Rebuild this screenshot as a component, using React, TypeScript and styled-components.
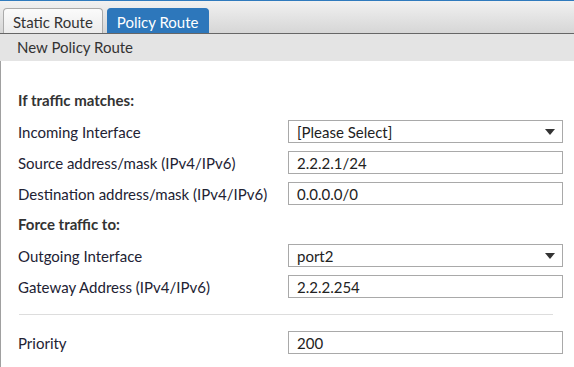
import React from 'react';
import styled, { createGlobalStyle } from 'styled-components';

const GlobalStyle = createGlobalStyle`
  html, body, #root {
    margin: 0;
    height: 100%;
  }
  body {
    font-family: Lato, "Liberation Sans", sans-serif;
    background-color: #ffffff;
    color: #333333;
  }
`;

const Page = styled.div`
  display: flex;
  flex-direction: column;
  height: 100vh;
`;

const TabBar = styled.div`
  height: 32px;
  display: flex;
  align-items: flex-end;
  gap: 4px;
  padding-left: 3px;
  border-top: 1px solid #2f7abd;
  border-bottom: 1px solid #666666;
  background: linear-gradient(to bottom, #f1f1f1, #d6d6d6);
`;

const Tab = styled.div<{ $active?: boolean }>`
  height: 25px;
  box-sizing: border-box;
  display: flex;
  align-items: center;
  padding: 2px 9px 0 9px;
  font-size: 15px;
  border-radius: 4px 4px 0 0;
  border: 1px solid ${p => (p.$active ? '#2d77bb' : '#aaaaaa')};
  border-bottom: none;
  color: ${p => (p.$active ? '#ffffff' : '#333333')};
  background: ${p => (p.$active ? '#2d77bb' : 'linear-gradient(to bottom, #fbfbfb, #ececec)')};
`;

const SubHeader = styled.div`
  height: 27px;
  line-height: 27px;
  padding-left: 17px;
  font-size: 15px;
  background-color: #e4e4e4;
  color: #333333;
`;

const Form = styled.div`
  flex: 1;
  display: flex;
  flex-direction: column;
  gap: 8px;
  padding: 28px 11px 0 17px;
  border-left: 1px solid #a0a0a0;
`;

const Heading = styled.div`
  height: 23px;
  line-height: 23px;
  font-size: 15px;
  font-weight: bold;
  color: #333333;
`;

const Row = styled.div`
  display: flex;
  align-items: center;
  height: 23px;
`;

const Label = styled.div`
  width: 270px;
  font-size: 15px;
  color: #222233;
`;

const Field = styled.div`
  flex: 1;
  height: 23px;
  box-sizing: border-box;
  display: flex;
  align-items: center;
  justify-content: space-between;
  padding: 0 7px 0 8px;
  border: 1px solid #a9a9a9;
  font-size: 15px;
  color: #222222;
`;

const Arrow = styled.span`
  width: 0;
  height: 0;
  border-left: 5px solid transparent;
  border-right: 5px solid transparent;
  border-top: 6px solid #333333;
`;

const Divider = styled.div`
  height: 1px;
  margin: 8px 10px 8px 1px;
  background-color: #dddddd;
`;

function App() {
  return (
    <Page>
      <GlobalStyle />
      <TabBar>
        <Tab>Static Route</Tab>
        <Tab $active>Policy Route</Tab>
      </TabBar>
      <SubHeader>New Policy Route</SubHeader>
      <Form>
        <Heading>If traffic matches:</Heading>
        <Row>
          <Label>Incoming Interface</Label>
          <Field>[Please Select]<Arrow /></Field>
        </Row>
        <Row>
          <Label>Source address/mask (IPv4/IPv6)</Label>
          <Field>2.2.2.1/24</Field>
        </Row>
        <Row>
          <Label>Destination address/mask (IPv4/IPv6)</Label>
          <Field>0.0.0.0/0</Field>
        </Row>
        <Heading>Force traffic to:</Heading>
        <Row>
          <Label>Outgoing Interface</Label>
          <Field>port2<Arrow /></Field>
        </Row>
        <Row>
          <Label>Gateway Address (IPv4/IPv6)</Label>
          <Field>2.2.2.254</Field>
        </Row>
        <Divider />
        <Row>
          <Label>Priority</Label>
          <Field>200</Field>
        </Row>
      </Form>
    </Page>
  );
}

export default App;
